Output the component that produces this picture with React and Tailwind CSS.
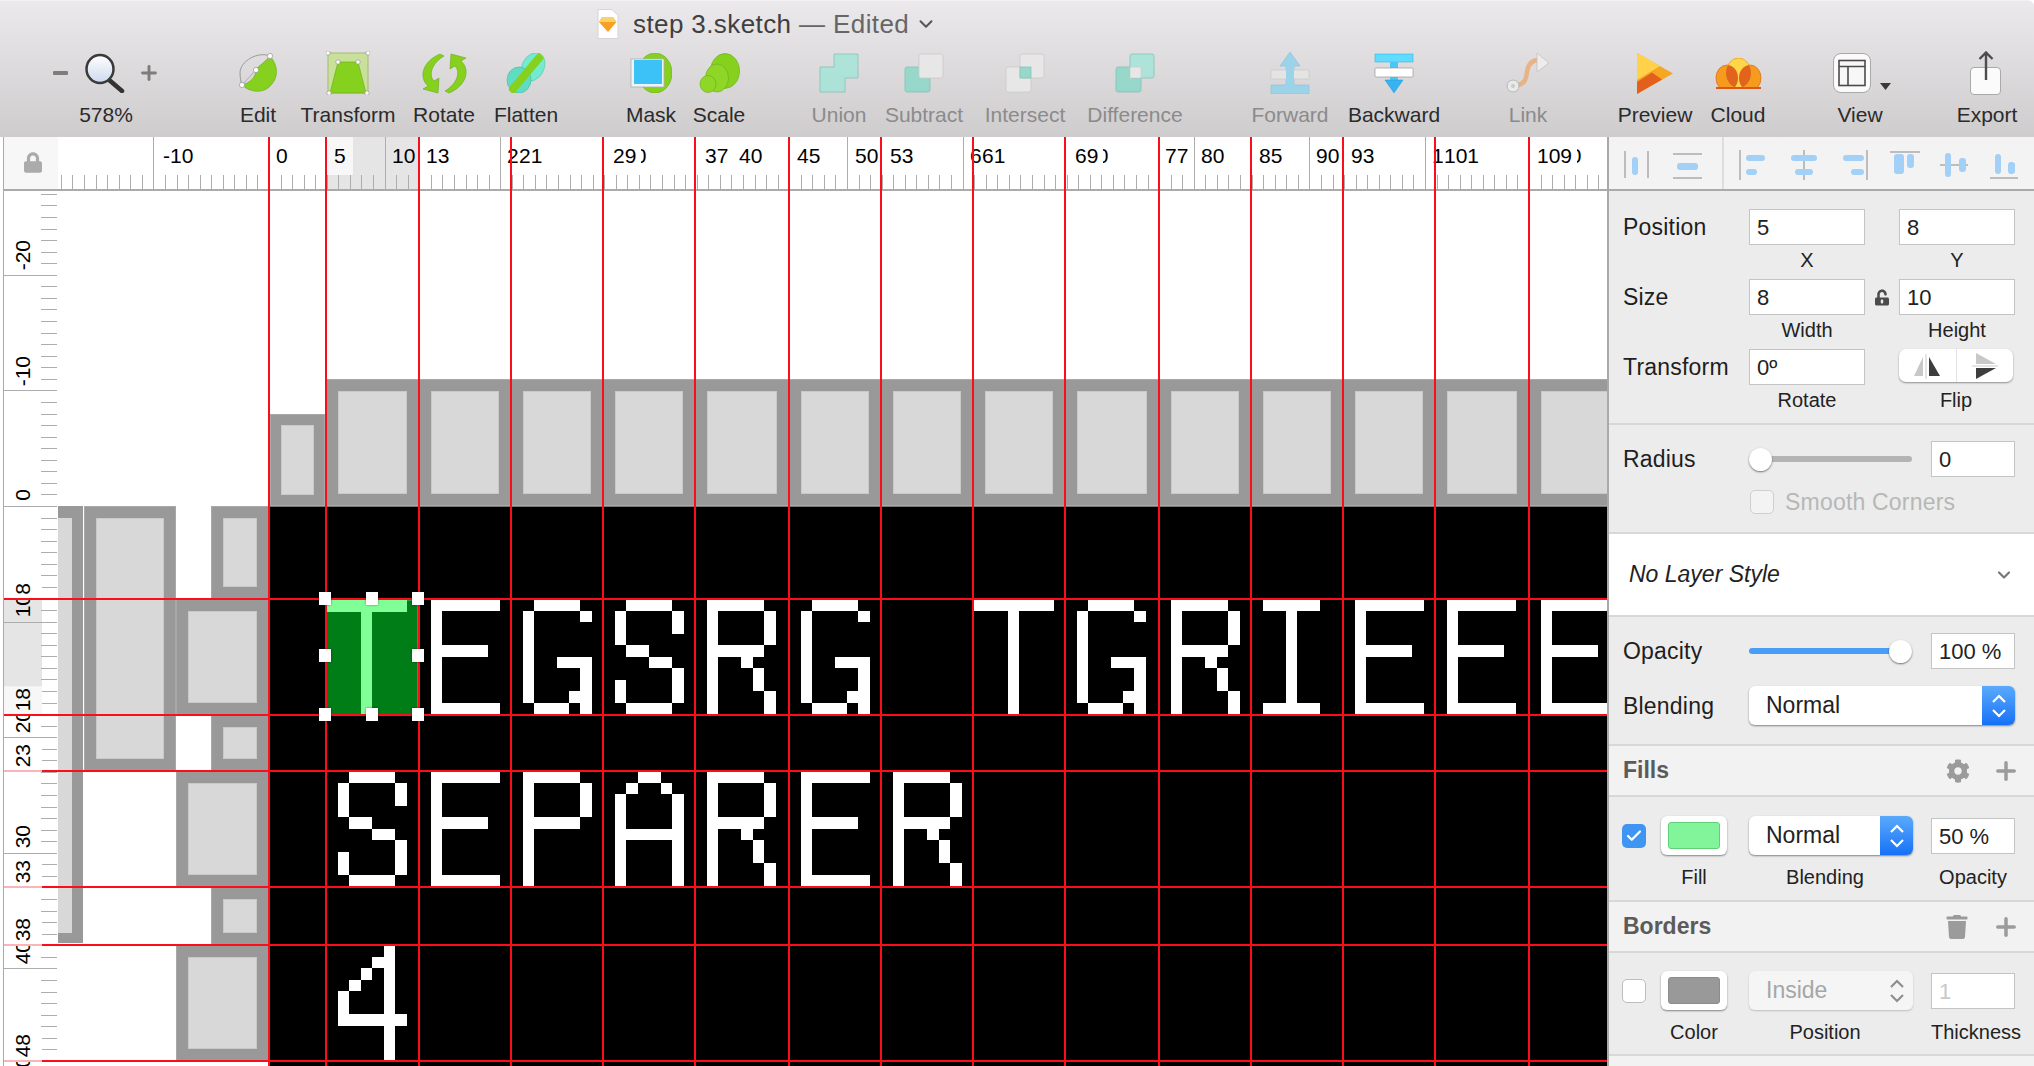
import React from "react";
import { Check, ChevronDown, Plus } from "lucide-react";
import { FaCog, FaLock, FaTrash, FaUnlockAlt } from "react-icons/fa";

const U = 11.56;
const GUIDE_X = [268, 325, 418, 510, 602, 694, 788, 880, 972, 1064, 1158, 1250, 1342, 1434, 1528];
const GUIDE_Y = [598, 714, 770, 886, 944, 1060];
const CANVAS_X = 58;
const CANVAS_Y = 190;

const GLYPHS = {
  E: ["######", "#", "#", "#", "#####", "#", "#", "#", "#", "######"].map((r) => "." + r),
  G: ["..####", ".#....#", ".#", ".#", ".#", ".#..###", ".#....#", ".#....#", ".#...##", "..###.#"],
  S: ["..####", ".#....#", ".#....#", ".#", "..##", "....##", "......#", ".#....#", ".#....#", "..####"],
  R: [".#####", ".#....#", ".#....#", ".#....#", ".#####", ".#..#", ".#...#", ".#...#", ".#....#", ".#....#"],
  T: ["#######", "...#", "...#", "...#", "...#", "...#", "...#", "...#", "...#", "...#"],
  I: [".#####", "...#", "...#", "...#", "...#", "...#", "...#", "...#", "...#", ".#####"],
  P: [".#####", ".#....#", ".#....#", ".#....#", ".#####", ".#", ".#", ".#", ".#", ".#"],
  A: ["...##", "..#..#", ".#....#", ".#....#", ".#....#", ".######", ".#....#", ".#....#", ".#....#", ".#....#"],
  4: [".....#", "....##", "...#.#", "..#..#", ".#...#", ".#...#", ".######", ".....#", ".....#", ".....#"],
};

const TEXT_CELLS = [
  { y: 599, items: [[2, "E"], [3, "G"], [4, "S"], [5, "R"], [6, "G"], [8, "T"], [9, "G"], [10, "R"], [11, "I"], [12, "E"], [13, "E"], [14, "E"]] },
  { y: 771, items: [[1, "S"], [2, "E"], [3, "P"], [4, "A"], [5, "R"], [6, "E"], [7, "R"]] },
  { y: 945, items: [[1, "4"]] },
];

const SIDE_BLOCKS = [
  [211, 506, 269, 599],
  [176, 599, 269, 715],
  [211, 715, 269, 771],
  [176, 771, 269, 887],
  [211, 887, 269, 945],
  [176, 945, 269, 1061],
];

// pixel letter on the canvas, one div per run of lit cells
function PixelGlyph({ ch, x, y, color = "#ffffff" }) {
  const runs = [];
  GLYPHS[ch].forEach((row, r) => {
    let c = 0;
    while (c < row.length) {
      if (row[c] === "#") {
        let end = c;
        while (row[end] === "#") end++;
        runs.push([r, c, end]);
        c = end;
      } else c++;
    }
  });
  return (
    <div aria-label={ch}>
      {runs.map(([r, a, b]) => {
        const left = Math.round(x + a * U);
        const right = Math.round(x + b * U);
        const top = Math.round(y + r * U);
        const bottom = Math.round(y + (r + 1) * U);
        return (
          <div
            key={`${r}-${a}`}
            className="absolute"
            style={{ left: left - CANVAS_X, top: top - CANVAS_Y, width: right - left, height: bottom - top, background: color }}
          />
        );
      })}
    </div>
  );
}

function Block({ x0, y0, x1, y1, pad = 12 }) {
  return (
    <div
      className="absolute bg-[#999999] border border-[#a8a8a8]"
      style={{ left: x0 - CANVAS_X, top: y0 - CANVAS_Y, width: x1 - x0, height: y1 - y0 }}
    >
      <div
        className="absolute bg-[#d8d8d8] border border-[#c9c9c9]"
        style={{ left: pad - 1, top: pad - 1, right: pad - 1, bottom: pad - 1 }}
      />
    </div>
  );
}

function Canvas() {
  const cells = GUIDE_X.map((g, i) => [g + 1, GUIDE_X[i + 1] ? GUIDE_X[i + 1] + 1 : 1620]);
  return (
    <div className="relative flex-1 bg-white overflow-hidden">
      <div className="absolute bg-black left-[211px] top-[316px] right-0 bottom-0 border-t border-[#777777]" />
      <Block x0={270} y0={414} x1={325} y1={506} pad={11} />
      {cells.slice(1).map(([a, b]) => (
        <Block key={a} x0={a} y0={379} x1={b} y1={506} />
      ))}
      {SIDE_BLOCKS.map(([a, b, c, d]) => (
        <Block key={b} x0={a} y0={b} x1={c} y1={d} />
      ))}
      <div className="absolute left-0 top-[316px] w-[25px] h-[437px] bg-[#999999]">
        <div className="absolute left-0 top-[12px] w-[14px] bottom-[10px] bg-[#d8d8d8]" />
      </div>
      <Block x0={84} y0={506} x1={176} y1={771} />

      {TEXT_CELLS.map((row) =>
        row.items.map(([g, ch]) => (
          <PixelGlyph key={`${row.y}-${g}`} ch={ch} x={GUIDE_X[g] + 1} y={row.y} />
        ))
      )}

      <div className="absolute left-[268px] top-[410px] w-[92px] h-[115px] bg-[#017d17] border border-[#2f9a42]" />
      <PixelGlyph ch="T" x={326} y={600} color="#80ff97" />
    </div>
  );
}

function Overlay() {
  const handles = [
    [325, 599], [372, 599], [418, 599],
    [325, 656], [418, 656],
    [325, 715], [372, 715], [418, 715],
  ];
  return (
    <div className="absolute inset-0 overflow-hidden pointer-events-none">
      <div className="absolute left-[3px] right-0 top-[52px] h-[2px] bg-[#aaaaaa]" />
      {GUIDE_X.map((x) => (
        <div key={x} className="absolute top-0 bottom-0 w-[2px] bg-[#fc0d1b]" style={{ left: x }} />
      ))}
      {GUIDE_Y.map((y, i) => (
        <div key={y}>
          <div className={`absolute left-[4px] w-[38px] h-[2px] ${i < 2 ? "bg-[#fc0d1b]" : "bg-[#fbb4b8]"}`} style={{ top: y - 137 }} />
          <div className="absolute left-[42px] right-0 h-[2px] bg-[#fc0d1b]" style={{ top: y - 137 }} />
        </div>
      ))}
      {handles.map(([x, y]) => (
        <div
          key={`${x}-${y}`}
          className="absolute w-[12px] h-[13px] bg-white shadow-[0_0_2px_rgba(0,0,0,0.5)]"
          style={{ left: x - 6, top: y - 137 - 7 }}
        />
      ))}
    </div>
  );
}

function TopRuler() {
  const ticks = [];
  for (let k = -18; k < 116; k++) ticks.push(k);
  const majors = [
    ["-10", 163], ["0", 276], ["10", 392], ["20", 507], ["30", 623], ["40", 739],
    ["50", 855], ["60", 970], ["70", 1085], ["80", 1201], ["90", 1316], ["100", 1432], ["110", 1548],
  ];
  const guides = [
    ["13", 426], ["21", 519], ["29", 613], ["37", 705], ["45", 797],
    ["53", 890], ["61", 982], ["69", 1075], ["77", 1165], ["85", 1259],
    ["93", 1351], ["101", 1444], ["109", 1537],
  ];
  return (
    <div className="flex h-[53px] shrink-0">
      <div className="w-[58px] shrink-0 flex items-center justify-center pl-[3px] bg-[#f7f7f7] border-l border-l-[#aaaaaa] ml-[3px] border-r-2 border-r-[#a9a9a9] -mr-[3px]">
        <FaLock className="text-[#ababab] w-[18px] h-[21px] -mt-[3px]" />
      </div>
      <div className="relative flex-1 bg-white overflow-hidden">
        <div className="absolute left-[268px] top-0 bottom-0 w-[93px] bg-[#e5e5e5]" />
        <svg className="absolute left-0 top-0" width="1549" height="53">
          {ticks.map((k) => {
            const x = Math.round(269 + k * U - CANVAS_X) + 0.5;
            return <line key={k} x1={x} x2={x} y1={k % 10 === 0 ? 0 : 38} y2="52" stroke="#adadad" strokeWidth="1" />;
          })}
        </svg>
        {majors.map(([t, x]) => (
          <span key={t} className="absolute top-[7px] text-[21px] leading-[24px] text-black" style={{ left: x - CANVAS_X }}>
            {t}
          </span>
        ))}
        <span className="absolute left-[268px] top-0 h-[38px] w-[27px] bg-[#f7f7f7] pl-[8px] pt-[7px] text-[21px] leading-[24px] text-black">5</span>
        {guides.map(([t, x]) => (
          <span
            key={t}
            className="absolute top-0 h-[38px] pt-[7px] pl-[1px] pr-[5px] bg-white text-[21px] leading-[24px] text-black"
            style={{ left: x - 1 - CANVAS_X }}
          >
            {t}
          </span>
        ))}
      </div>
    </div>
  );
}

function SideRuler() {
  const H = 876;
  const ticks = [];
  for (let k = -29; k < 50; k++) ticks.push(k);
  const majors = [["-20", 275], ["-10", 391], ["0", 506], ["10", 622], ["20", 738], ["30", 853], ["40", 969], ["50", 1084]];
  const guides = [["8", 599], ["18", 715], ["23", 771], ["33", 887], ["38", 945], ["48", 1061]];
  return (
    <div className="relative w-[58px] shrink-0 bg-white overflow-hidden border-l border-l-[#aaaaaa] ml-[3px] border-r-2 border-r-[#a9a9a9] -mr-[3px]">
      <div className="absolute left-0 w-[38px] top-[409px] h-[116px] bg-[#e5e5e5]" />
      <svg className="absolute left-0 top-0" width="55" height={H}>
        {ticks.map((k) => {
          const y = Math.round(506 + k * U - CANVAS_Y) + 0.5;
          return <line key={k} x1={k % 10 === 0 ? 0 : 37} x2="53" y1={y} y2={y} stroke="#adadad" strokeWidth="1" />;
        })}
      </svg>
      {majors.map(([t, y]) => (
        <span
          key={t}
          className="absolute left-0 w-[38px] pt-[5px] text-[21px] leading-[38px] text-black [writing-mode:vertical-rl] rotate-180"
          style={{ bottom: H - (y - CANVAS_Y) }}
        >
          {t}
        </span>
      ))}
      {guides.map(([t, y]) => (
        <span
          key={t}
          className={`absolute left-0 w-[38px] pt-[4px] pb-[2px] text-[21px] leading-[38px] text-black [writing-mode:vertical-rl] rotate-180 ${t === "18" ? "bg-[#f7f7f7]" : "bg-white"}`}
          style={{ bottom: H - (y - CANVAS_Y) }}
        >
          {t}
        </span>
      ))}
    </div>
  );
}

/* toolbar icons */
const GREEN = "#86d11e";

function ZoomIcon() {
  return (
    <svg width="41" height="40" viewBox="0 0 41 40">
      <defs>
        <linearGradient id="lens" x1="0" y1="0" x2="0" y2="1">
          <stop offset="0" stopColor="#ffffff" />
          <stop offset="1" stopColor="#cdd9ef" />
        </linearGradient>
      </defs>
      <line x1="24" y1="26" x2="38" y2="38" stroke="#333" strokeWidth="4.5" strokeLinecap="round" />
      <ellipse cx="16" cy="16" rx="13.5" ry="14" fill="url(#lens)" stroke="#3a3a3a" strokeWidth="2.5" />
    </svg>
  );
}
function EditIcon() {
  return (
    <svg width="41" height="40" viewBox="0 0 41 40">
      <path d="M32 3C20-2 2 8 2 20c0 5 1 9 2 12" fill="none" stroke="#9a9a9a" strokeWidth="1" />
      <path d="M32 3c8 9 10 22-2 32-8 6-20 3-26-3 8-2 14-8 14-15 2-5 10-7 14-14z" fill={GREEN} stroke="#6aa81a" strokeWidth="0.6" />
      <path d="M32 3 18 17 4 32" fill="none" stroke="#9a9a9a" strokeWidth="0.7" />
      {[[32, 3], [18, 17], [4, 32]].map(([x, y]) => (
        <circle key={x} cx={x} cy={y} r="2.6" fill="#fff" stroke="#888" strokeWidth="0.6" />
      ))}
    </svg>
  );
}
function TransformIcon() {
  return (
    <svg width="44" height="44" viewBox="0 0 44 44">
      <rect x="2" y="2" width="40" height="40" fill="#c9e09a" stroke="#a4bb70" />
      <path d="M12 11h20l8 31H4z" fill={GREEN} stroke="#6aa81a" strokeWidth="0.6" />
      {[[2, 2], [42, 2], [12, 11], [32, 11], [3, 42], [41, 42]].map(([x, y]) => (
        <circle key={`${x}${y}`} cx={x} cy={y} r="2.2" fill="#fff" stroke="#888" strokeWidth="0.6" />
      ))}
    </svg>
  );
}
function RotateIcon() {
  const half = "M20 1C3 8-2 24 8 33L3 36l15 4 1-15-5 3C8 22 12 10 24 3z";
  return (
    <svg width="49" height="41" viewBox="0 0 49 41">
      <path d={half} fill={GREEN} stroke="#6aa81a" strokeWidth="0.6" />
      <path d={half} transform="rotate(180 24.5 20.5)" fill={GREEN} stroke="#6aa81a" strokeWidth="0.6" />
    </svg>
  );
}
function FlattenIcon() {
  return (
    <svg width="40" height="40" viewBox="0 0 40 40">
      <ellipse cx="27" cy="14" rx="11" ry="15" transform="rotate(28 27 14)" fill="#74ebd0" stroke="#52c9ae" strokeWidth="0.6" />
      <ellipse cx="13" cy="27" rx="12" ry="13" fill="#5fdcc2" stroke="#42b89f" strokeWidth="0.6" />
      <path d="M33 5 7 36" stroke={GREEN} strokeWidth="8" strokeLinecap="round" />
    </svg>
  );
}
function MaskIcon() {
  return (
    <svg width="42" height="40" viewBox="0 0 42 40">
      <ellipse cx="25" cy="20" rx="17" ry="20" fill={GREEN} stroke="#6aa81a" strokeWidth="0.6" />
      <rect x="1" y="6" width="33" height="28" fill="#eef3f3" stroke="#a8b0b0" strokeWidth="0.8" />
      <rect x="4" y="7" width="28" height="24" fill="#3cc2f6" />
    </svg>
  );
}
function ScaleIcon() {
  return (
    <svg width="41" height="40" viewBox="0 0 41 40">
      <ellipse cx="26" cy="18" rx="14.5" ry="17.5" fill={GREEN} stroke="#6aa81a" strokeWidth="0.6" />
      <ellipse cx="18" cy="25" rx="11.5" ry="14" fill="#8fd726" stroke="#6aa81a" strokeWidth="0.6" />
      <ellipse cx="9" cy="31" rx="8" ry="8.5" fill="#8fd726" stroke="#6aa81a" strokeWidth="0.6" />
    </svg>
  );
}
const TEAL = "#a8e4d8";
const TEAL_D = "#91d8ca";
const TEAL_S = "#7cc2b4";
const PALE = "#e9e9e9";
const PALE_S = "#c9c9c9";
function UnionIcon() {
  return (
    <svg width="40" height="40" viewBox="0 0 40 40">
      <path d="M15 1h24v24H26v14H1V14h14z" fill={TEAL} stroke={TEAL_S} strokeWidth="0.8" strokeLinejoin="round" />
    </svg>
  );
}
function SubtractIcon() {
  return (
    <svg width="40" height="40" viewBox="0 0 40 40">
      <rect x="1" y="14" width="25" height="25" rx="2" fill={TEAL_D} stroke={TEAL_S} strokeWidth="0.8" />
      <rect x="15" y="1" width="24" height="24" rx="2" fill={PALE} stroke={PALE_S} strokeWidth="0.8" />
    </svg>
  );
}
function IntersectIcon() {
  return (
    <svg width="40" height="40" viewBox="0 0 40 40">
      <rect x="1" y="14" width="25" height="25" rx="2" fill={PALE} stroke={PALE_S} strokeWidth="0.8" />
      <rect x="15" y="1" width="24" height="24" rx="2" fill={PALE} stroke={PALE_S} strokeWidth="0.8" />
      <rect x="15" y="14" width="11" height="11" fill={TEAL_D} stroke={TEAL_S} strokeWidth="0.8" />
    </svg>
  );
}
function DifferenceIcon() {
  return (
    <svg width="40" height="40" viewBox="0 0 40 40">
      <rect x="1" y="14" width="25" height="25" rx="2" fill={TEAL_D} stroke={TEAL_S} strokeWidth="0.8" />
      <rect x="15" y="1" width="24" height="24" rx="2" fill={TEAL} stroke={TEAL_S} strokeWidth="0.8" />
      <rect x="15" y="14" width="11" height="11" fill={PALE} stroke={PALE_S} strokeWidth="0.6" />
    </svg>
  );
}
function ForwardIcon() {
  return (
    <svg width="40" height="42" viewBox="0 0 40 42">
      <path d="M20 0l10 14h-6v19h15v9H1v-9h15V14h-6z" fill="#95d3ec" stroke="#7fc0da" strokeWidth="0.6" />
      <rect x="1" y="18" width="38" height="9" rx="1" fill="#e6e6e6" stroke="#c8c8c8" strokeWidth="0.6" />
      <rect x="16" y="14" width="8" height="19" fill="#95d3ec" />
    </svg>
  );
}
function BackwardIcon() {
  return (
    <svg width="40" height="40" viewBox="0 0 40 40">
      <rect x="1" y="1" width="38" height="8" fill="#5fdcff" stroke="#3fb6df" strokeWidth="0.6" />
      <rect x="16" y="9" width="8" height="20" fill="#4cc6f3" />
      <path d="M11 27h18l-9 13z" fill="#35b3f2" stroke="#2b95cc" strokeWidth="0.5" />
      <rect x="1" y="15" width="38" height="9" rx="1" fill="#ffffff" stroke="#9a9a9a" strokeWidth="0.7" />
    </svg>
  );
}
function LinkIcon() {
  return (
    <svg width="44" height="42" viewBox="0 0 44 42">
      <path d="M9 33c10 0 11-6 12-13s4-12 12-12" fill="none" stroke="#eab07c" strokeWidth="4.5" />
      <circle cx="7" cy="34" r="6" fill="#ececec" stroke="#b5b5b5" strokeWidth="1" />
      <circle cx="7" cy="34" r="2" fill="#c9c9c9" />
      <path d="M31 1l12 10-12 9z" fill="#eeeeee" stroke="#c0c0c0" strokeWidth="0.8" />
    </svg>
  );
}
function PreviewIcon() {
  return (
    <svg width="36" height="41" viewBox="0 0 36 41">
      <path d="M0 0l36 20.5L0 41z" fill="#f5a623" />
      <path d="M0 0l23 13L0 27z" fill="#ffd24a" />
      <path d="M0 41l25-14.5-10-7L0 29z" fill="#e2601c" />
    </svg>
  );
}
function CloudIcon() {
  return (
    <svg width="47" height="31" viewBox="0 0 47 31">
      <defs>
        <clipPath id="cloudBase">
          <rect x="0" y="0" width="47" height="30" />
        </clipPath>
        <clipPath id="cloudMid">
          <ellipse cx="23.5" cy="15" rx="12.5" ry="15" />
        </clipPath>
      </defs>
      <g clipPath="url(#cloudBase)">
        <ellipse cx="12" cy="20" rx="11" ry="13" fill="#f79b1e" stroke="#d9701a" strokeWidth="0.8" />
        <ellipse cx="35" cy="20" rx="11" ry="13" fill="#f79b1e" stroke="#d9701a" strokeWidth="0.8" />
        <ellipse cx="23.500" cy="15" rx="12.5" ry="15" fill="#ffd54a" stroke="#e9a020" strokeWidth="0.8" />
        <g clipPath="url(#cloudMid)">
          <ellipse cx="12" cy="20" rx="11" ry="13" fill="#e2631d" />
          <ellipse cx="35" cy="20" rx="11" ry="13" fill="#e2631d" />
        </g>
      </g>
      <rect x="1" y="29" width="45" height="2" fill="#d9581a" />
    </svg>
  );
}
function ViewIcon() {
  return (
    <div className="relative w-[38px] h-[40px] -ml-[16px] rounded-[8px] bg-[#fbfbfb] border border-[#a9a9a9] flex items-center justify-center">
      <svg width="28" height="28" viewBox="0 0 28 28">
        <rect x="1" y="1.5" width="26" height="25" fill="#f7f7f7" stroke="#4a4a4a" strokeWidth="1.6" />
        <path d="M1 7.5h26M10 7.5v19" stroke="#4a4a4a" strokeWidth="1.6" fill="none" />
      </svg>
      <svg className="absolute left-[46px] top-[29px]" width="11" height="7" viewBox="0 0 11 7">
        <path d="M0 0h11L5.500 7z" fill="#3a3a3a" />
      </svg>
    </div>
  );
}
function ExportIcon() {
  return (
    <div className="relative w-[31px] h-[44px] -ml-[4px] flex items-end">
      <div className="w-[31px] h-[28px] rounded-[4px] bg-[#fbfbfb] border border-[#a9a9a9]" />
      <svg className="absolute left-[8px] top-0" width="16" height="30" viewBox="0 0 16 30">
        <path d="M8 29V2M1.500 8 8 1.500 14.500 8" fill="none" stroke="#4d4d4d" strokeWidth="2.4" />
      </svg>
    </div>
  );
}

const TOOLS = [
  { label: "Edit", Icon: EditIcon, cls: "w-[60px] ml-[56px]" },
  { label: "Transform", Icon: TransformIcon, cls: "w-[100px] ml-[10px]" },
  { label: "Rotate", Icon: RotateIcon, cls: "w-[80px] ml-[6px]" },
  { label: "Flatten", Icon: FlattenIcon, cls: "w-[76px] ml-[4px]" },
  { label: "Mask", Icon: MaskIcon, cls: "w-[60px] ml-[57px]" },
  { label: "Scale", Icon: ScaleIcon, cls: "w-[60px] ml-[8px]" },
  { label: "Union", Icon: UnionIcon, cls: "w-[60px] ml-[60px]", off: true },
  { label: "Subtract", Icon: SubtractIcon, cls: "w-[88px] ml-[11px]", off: true },
  { label: "Intersect", Icon: IntersectIcon, cls: "w-[90px] ml-[12px]", off: true },
  { label: "Difference", Icon: DifferenceIcon, cls: "w-[104px] ml-[13px]", off: true },
  { label: "Forward", Icon: ForwardIcon, cls: "w-[84px] ml-[61px]", off: true },
  { label: "Backward", Icon: BackwardIcon, cls: "w-[100px] ml-[12px]" },
  { label: "Link", Icon: LinkIcon, cls: "w-[50px] ml-[59px]", off: true },
  { label: "Preview", Icon: PreviewIcon, cls: "w-[80px] ml-[62px]" },
  { label: "Cloud", Icon: CloudIcon, cls: "w-[60px] ml-[13px]" },
  { label: "View", Icon: ViewIcon, cls: "w-[60px] ml-[62px]" },
  { label: "Export", Icon: ExportIcon, cls: "w-[70px] ml-[62px]" },
];

function Toolbar() {
  return (
    <div className="h-[137px] shrink-0 bg-linear-to-b from-[#ebe9eb] to-[#cecccd] border-t border-[#f3f1f3] rounded-tr-[6px]">
      <div className="h-[45px] flex items-center pl-[597px]">
        <svg width="22" height="30" viewBox="0 0 22 30">
          <path d="M1 0.500h14l6 6v23H1z" fill="#ffffff" stroke="#d5d5d5" />
          <path d="M5 8h11l3.500 5L11 23 2 13z" fill="#f7a021" />
          <path d="M5 8h11l3.500 5H2z" fill="#fcd16a" />
        </svg>
        <span className="ml-[14px] text-[26px] leading-[30px] tracking-[0.4px] text-[#3f3f3f]">
          step 3.sketch <span className="text-[#666666]">— Edited</span>
        </span>
        <ChevronDown className="ml-[6px] text-[#555555] w-[22px] h-[22px]" strokeWidth={2.2} />
      </div>
      <div className="flex items-start pt-[4px] pl-[40px]">
        <div className="w-[132px] flex flex-col items-center">
          <div className="h-[46px] flex items-center">
            <div className="w-[15px] h-[4px] bg-[#7d7d7d] rounded-[1px] mr-[16px]" />
            <ZoomIcon />
            <Plus className="ml-[13px] text-[#7d7d7d] w-[22px] h-[22px]" strokeWidth={3.2} />
          </div>
          <span className="mt-[7px] text-[21px] leading-[24px] text-[#2b2b2b]">578%</span>
        </div>
        {TOOLS.map(({ label, Icon, cls, off }) => (
          <div key={label} className={`${cls} flex flex-col items-center shrink-0`}>
            <div className={`h-[46px] flex items-center justify-center ${off ? "opacity-90" : ""}`}>
              <Icon />
            </div>
            <span className={`mt-[7px] text-[21px] leading-[24px] whitespace-nowrap ${off ? "text-[#8b8b8b]" : "text-[#2b2b2b]"}`}>
              {label}
            </span>
          </div>
        ))}
      </div>
    </div>
  );
}

/* inspector */
function AlignBar() {
  const blue = "#a2d0f6";
  const gray = "#bdbdbd";
  const pills = [
    [1632, 157, 6, 18], [1677, 163, 21, 7],
    [1746, 155, 19, 6], [1746, 169, 11, 6],
    [1791, 155, 26, 6], [1795, 169, 18, 6],
    [1843, 155, 21, 6], [1851, 169, 13, 6],
    [1894, 154, 10, 20], [1907, 154, 7, 14],
    [1945, 153, 6, 24], [1959, 158, 7, 14],
    [1995, 154, 6, 20], [2008, 162, 7, 12],
  ];
  const lines = [
    [1625, 151, 1625, 178], [1648, 151, 1648, 178],
    [1673, 154, 1702, 154], [1673, 178, 1702, 178],
    [1740, 150, 1740, 180], [1804, 150, 1804, 180], [1867, 150, 1867, 180],
    [1890, 152, 1920, 152], [1940, 165, 1968, 165], [1990, 178, 2018, 178],
  ];
  return (
    <div className="h-[54px] shrink-0 bg-[#f3f3f3] border-b-2 border-[#aaaaaa]">
      <svg width="425" height="52" viewBox="1609 137 425 52">
        {lines.map(([a, b, c, d], i) => (
          <line key={i} x1={a} y1={b} x2={c} y2={d} stroke={gray} strokeWidth="2" />
        ))}
        {pills.map(([x, y, w, h], i) => (
          <rect key={i} x={x} y={y} width={w} height={h} rx="3" fill={blue} />
        ))}
        <rect x="1722" y="137" width="2" height="52" fill="#dedede" />
      </svg>
    </div>
  );
}

function Field({ value, className = "", muted }) {
  return (
    <div className={`h-[36px] bg-white border border-[#c4c4c4] pl-[7px] text-[22px] leading-[36px] ${muted ? "text-[#c9c9c9] bg-[#f5f5f5]" : "text-[#222222]"} ${className}`}>
      {value}
    </div>
  );
}

function Caption({ children, className = "" }) {
  return <div className={`h-[34px] text-center text-[20px] leading-[30px] text-[#222222] whitespace-nowrap ${className}`}>{children}</div>;
}

function RowLabel({ children }) {
  return <div className="w-[126px] h-[36px] flex items-center pt-[1px] text-[23px] tracking-[0.2px] text-[#1e1e1e] shrink-0">{children}</div>;
}

function Stepper({ stroke }) {
  return (
    <svg width="18" height="26" viewBox="0 0 18 26" fill="none" stroke={stroke} strokeWidth="2.2">
      <path d="M3 9l6-6 6 6M3 17l6 6 6-6" />
    </svg>
  );
}

function Select({ value, className = "" }) {
  return (
    <div className={`flex h-[39px] rounded-[6px] bg-white shadow-[0_1px_2px_rgba(0,0,0,0.45)] overflow-hidden ${className}`}>
      <div className="flex-1 pl-[17px] text-[23px] leading-[39px] text-[#222222]">{value}</div>
      <div className="w-[33px] flex items-center justify-center bg-linear-to-b from-[#5aaafb] to-[#1470f6]">
        <Stepper stroke="#ffffff" />
      </div>
    </div>
  );
}

function Slider({ pct, fill }) {
  return (
    <div className="relative w-[163px] h-[36px] shrink-0">
      <div className="absolute left-0 right-0 top-[15px] h-[6px] rounded-full" style={{ background: fill }} />
      <div
        className="absolute top-[7px] w-[23px] h-[23px] rounded-full bg-white shadow-[0_1px_2px_rgba(0,0,0,0.5)]"
        style={{ left: `calc(${pct}% - ${pct ? 23 : 0}px)` }}
      />
    </div>
  );
}

function Swatch({ fill, stroke }) {
  return (
    <div className="w-[66px] h-[39px] rounded-[6px] bg-white shadow-[0_1px_2px_rgba(0,0,0,0.45)] p-[6px_7px] ml-[15px] shrink-0">
      <div className="w-full h-full rounded-[3px] border" style={{ background: fill, borderColor: stroke }} />
    </div>
  );
}

function SectionHead({ title, icon }) {
  return (
    <div className="h-[51px] shrink-0 bg-[#f2f2f2] border-b-2 border-[#d8d8d8] flex items-center pl-[14px] pr-[14px]">
      <span className="flex-1 text-[23px] font-bold text-[#5b5b5b]">{title}</span>
      {icon}
      <Plus className="ml-[22px] w-[28px] h-[28px] text-[#9b9b9b]" strokeWidth={3} />
    </div>
  );
}

function Inspector() {
  return (
    <div className="w-[427px] shrink-0 flex flex-col bg-[#ececec] border-l-2 border-[#a9a9a9] text-[#222222]">
      <AlignBar />

      <div className="h-[234px] shrink-0 border-b-2 border-[#d8d8d8] pl-[14px] pt-[18px]">
        <div className="flex">
          <RowLabel>Position</RowLabel>
          <div className="w-[116px]">
            <Field value="5" />
            <Caption>X</Caption>
          </div>
          <div className="w-[34px]" />
          <div className="w-[116px]">
            <Field value="8" />
            <Caption>Y</Caption>
          </div>
        </div>
        <div className="flex">
          <RowLabel>Size</RowLabel>
          <div className="w-[116px]">
            <Field value="8" />
            <Caption>Width</Caption>
          </div>
          <div className="w-[34px] h-[36px] flex items-center justify-center">
            <FaUnlockAlt className="w-[14px] h-[19px] text-[#4b4b4b]" />
          </div>
          <div className="w-[116px]">
            <Field value="10" />
            <Caption>Height</Caption>
          </div>
        </div>
        <div className="flex">
          <RowLabel>Transform</RowLabel>
          <div className="w-[116px]">
            <Field value="0º" />
            <Caption>Rotate</Caption>
          </div>
          <div className="w-[34px]" />
          <div className="w-[114px]">
            <div className="h-[33px] flex rounded-[7px] bg-white shadow-[0_1px_2px_rgba(0,0,0,0.4)]">
              <div className="flex-1 flex items-center justify-center border-r border-[#e2e2e2]">
                <svg width="28" height="26" viewBox="0 0 28 26">
                  <path d="M10 4v19H1z" fill="#c8c8c8" />
                  <path d="M13 1v25" stroke="#d4d4d4" strokeWidth="1.2" />
                  <path d="M16 4v19h11z" fill="#3d3d3d" />
                </svg>
              </div>
              <div className="flex-1 flex items-center justify-center">
                <svg width="26" height="28" viewBox="0 0 26 28">
                  <path d="M4 1l20 11H4z" fill="#c8c8c8" />
                  <path d="M0 14h26" stroke="#d4d4d4" strokeWidth="1.2" />
                  <path d="M4 16h20L4 27z" fill="#3d3d3d" />
                </svg>
              </div>
            </div>
            <Caption className="pt-[3px]">Flip</Caption>
          </div>
        </div>
      </div>

      <div className="h-[109px] shrink-0 border-b-2 border-[#d8d8d8] pl-[14px] pt-[16px]">
        <div className="flex">
          <RowLabel>Radius</RowLabel>
          <Slider pct={0} fill="#b4b4b4" />
          <Field value="0" className="w-[84px] ml-[19px]" />
        </div>
        <div className="flex items-center mt-[13px] pl-[127px]">
          <div className="w-[24px] h-[24px] rounded-[5px] border border-[#cfcfcf] bg-[#f3f3f3]" />
          <span className="ml-[11px] text-[23px] tracking-[0.2px] leading-[24px] text-[#b7b7b7]">Smooth Corners</span>
        </div>
      </div>

      <div className="h-[83px] shrink-0 bg-white border-b-2 border-[#d8d8d8] flex items-center pl-[20px] pr-[20px]">
        <span className="flex-1 italic text-[23px] text-[#222222]">No Layer Style</span>
        <ChevronDown className="w-[20px] h-[20px] text-[#777777]" strokeWidth={2.6} />
      </div>

      <div className="h-[129px] shrink-0 border-b-2 border-[#d8d8d8] pl-[14px] pt-[16px]">
        <div className="flex">
          <RowLabel>Opacity</RowLabel>
          <Slider pct={100} fill="#4a9df5" />
          <Field value="100 %" className="w-[84px] ml-[19px]" />
        </div>
        <div className="flex items-center mt-[17px]">
          <RowLabel>Blending</RowLabel>
          <Select value="Normal" className="w-[266px]" />
        </div>
      </div>

      <SectionHead title="Fills" icon={<FaCog className="w-[24px] h-[24px] text-[#9b9b9b]" />} />

      <div className="h-[105px] shrink-0 border-b-2 border-[#d8d8d8] pl-[13px] pt-[19px]">
        <div className="flex items-center">
          <div className="w-[24px] h-[24px] rounded-[5px] bg-[#3f95f2] flex items-center justify-center shrink-0">
            <Check className="w-[18px] h-[18px] text-white" strokeWidth={3} />
          </div>
          <Swatch fill="#82f49a" stroke="#5fd078" />
          <Select value="Normal" className="w-[164px] ml-[22px]" />
          <Field value="50 %" className="w-[84px] ml-[18px]" />
        </div>
        <div className="flex pt-[7px]">
          <Caption className="w-[66px] ml-[39px]">Fill</Caption>
          <Caption className="w-[164px] ml-[16px]">Blending</Caption>
          <Caption className="w-[84px] ml-[24px]">Opacity</Caption>
        </div>
      </div>

      <SectionHead title="Borders" icon={<FaTrash className="w-[22px] h-[24px] mr-[2px] text-[#9b9b9b]" />} />

      <div className="h-[103px] shrink-0 border-b-2 border-[#d8d8d8] pl-[13px] pt-[18px]">
        <div className="flex items-center">
          <div className="w-[24px] h-[24px] rounded-[5px] border border-[#bdbdbd] bg-white shrink-0" />
          <Swatch fill="#999999" stroke="#8c8c8c" />
          <div className="w-[164px] h-[39px] ml-[22px] rounded-[6px] bg-[#f5f5f5] shadow-[0_1px_2px_rgba(0,0,0,0.2)] flex items-center pl-[17px] pr-[7px] text-[23px] text-[#a6a6a6]">
            <span className="flex-1">Inside</span>
            <Stepper stroke="#8f8f8f" />
          </div>
          <Field value="1" muted className="w-[84px] ml-[18px]" />
        </div>
        <div className="flex pt-[7px]">
          <Caption className="w-[66px] ml-[39px]">Color</Caption>
          <Caption className="w-[164px] ml-[16px]">Position</Caption>
          <Caption className="w-[84px] ml-[24px]">Thickness</Caption>
        </div>
      </div>

      <div className="flex-1 bg-[#f2f2f2]" />
    </div>
  );
}

export default function App() {
  return (
    <div className="w-[2034px] h-[1066px] overflow-hidden flex flex-col bg-white font-['Liberation_Sans',sans-serif]">
      <Toolbar />
      <div className="flex flex-1 min-h-0">
        <div className="relative flex flex-col flex-1 min-w-0">
          <TopRuler />
          <div className="flex flex-1 min-h-0">
            <SideRuler />
            <Canvas />
          </div>
          <Overlay />
        </div>
        <Inspector />
      </div>
    </div>
  );
}
